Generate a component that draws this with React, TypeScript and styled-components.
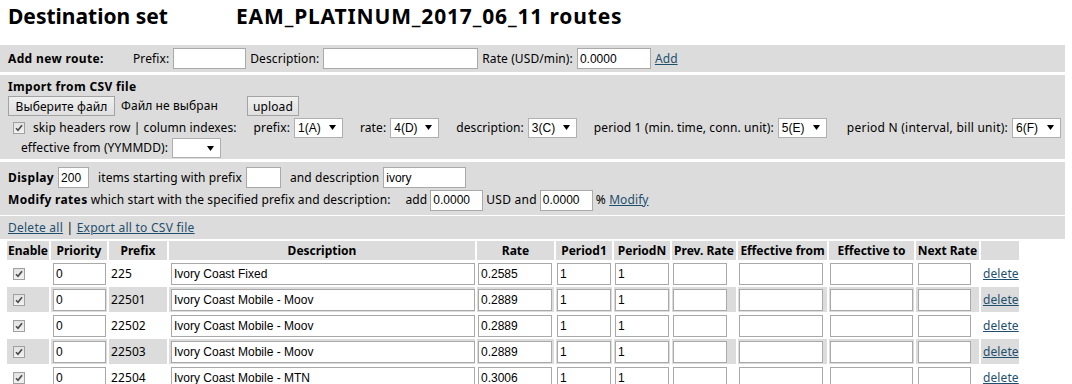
import styled, { createGlobalStyle } from "styled-components";

const routes = [
  { prefix: "225", description: "Ivory Coast Fixed", rate: "0.2585" },
  { prefix: "22501", description: "Ivory Coast Mobile - Moov", rate: "0.2889" },
  { prefix: "22502", description: "Ivory Coast Mobile - Moov", rate: "0.2889" },
  { prefix: "22503", description: "Ivory Coast Mobile - Moov", rate: "0.2889" },
  { prefix: "22504", description: "Ivory Coast Mobile - MTN", rate: "0.3006" },
  { prefix: "22505", description: "Ivory Coast Mobile - MTN", rate: "0.3006" },
];

const columns = [
  { title: "Enable", width: 42 },
  { title: "Priority", width: 56 },
  { title: "Prefix", width: 58 },
  { title: "Description", width: 306 },
  { title: "Rate", width: 77 },
  { title: "Period1", width: 56 },
  { title: "PeriodN", width: 56 },
  { title: "Prev. Rate", width: 64 },
  { title: "Effective from", width: 89 },
  { title: "Effective to", width: 85 },
  { title: "Next Rate", width: 63 },
  { title: "", width: 38 },
];

function Check() {
  return (
    <CheckBox>
      <svg width="8" height="8" viewBox="0 0 8 8">
        <path d="M1 4.2 L3 6.3 L7 1.2" fill="none" stroke="#4a4a4a" strokeWidth="1.6" />
      </svg>
    </CheckBox>
  );
}

function Select({ value, w }: { value: string; w: number }) {
  return (
    <SelectBox $w={w}>
      <span>{value}</span>
      <svg width="7" height="5" viewBox="0 0 7 5">
        <path d="M0 0 H7 L3.5 5 Z" fill="#000" />
      </svg>
    </SelectBox>
  );
}

function App() {
  return (
    <>
      <GlobalStyle />
      <Title>
        <TitleName>Destination set</TitleName>
        <SetName>EAM_PLATINUM_2017_06_11 routes</SetName>
      </Title>

      <Panel $h={27}>
        <Line>
          <PanelTitle $w={121}>Add new route:</PanelTitle>
          <span>Prefix:</span>
          <Field $w={73} value="" readOnly />
          <span>Description:</span>
          <Field $w={155} value="" readOnly />
          <span>Rate (USD/min):</span>
          <Field $w={74} value="0.0000" readOnly />
          <Link href="#">Add</Link>
        </Line>
      </Panel>

      <Panel $h={84} $top={4}>
        <Line $h={16}>
          <b>Import from CSV file</b>
        </Line>
        <Line $h={22}>
          <Button $w={107}>Выберите файл</Button>
          <NoFile>Файл не выбран</NoFile>
          <Button $w={52}>upload</Button>
        </Line>
        <Line $h={21} $gap={17}>
          <Group $indent={5}>
            <Check />
            <span style={{ marginLeft: 4 }}>skip headers row | column indexes:</span>
          </Group>
          <Group>
            <span>prefix:</span>
            <Select value="1(A)" w={49} />
          </Group>
          <Group>
            <span>rate:</span>
            <Select value="4(D)" w={49} />
          </Group>
          <Group>
            <span>description:</span>
            <Select value="3(C)" w={49} />
          </Group>
          <Group>
            <span>period 1 (min. time, conn. unit):</span>
            <Select value="5(E)" w={49} />
          </Group>
          <Group $indent={3}>
            <Wide>period N (interval, bill unit):</Wide>
            <Select value="6(F)" w={49} />
          </Group>
        </Line>
        <Line $h={20}>
          <Group $indent={13}>
            <span>effective from (YYMMDD):</span>
            <Select value="" w={49} />
          </Group>
        </Line>
      </Panel>

      <Panel $h={53} $gap={1} $top={4}>
        <Line $h={23} $gap={9}>
          <Group>
            <b>Display</b>
            <Field $w={31} value="200" readOnly />
          </Group>
          <Group>
            <span>items starting with prefix</span>
            <Field $w={35} value="" readOnly />
          </Group>
          <Group>
            <span>and description</span>
            <Field $w={83} value="ivory" readOnly />
          </Group>
        </Line>
        <Line $h={22} $gap={3}>
          <span>
            <b>Modify rates</b> which start with the specified prefix and description:
          </span>
          <span style={{ marginLeft: 12 }}>add</span>
          <Field $w={53} value="0.0000" readOnly />
          <Wide>USD and</Wide>
          <Field $w={53} value="0.0000" readOnly />
          <span>
            % <Link href="#">Modify</Link>
          </span>
        </Line>
      </Panel>

      <Panel $h={23} $gap={1}>
        <Line $h={23}>
          <Wide>
            <Link href="#">Delete all</Link> | <Link href="#">Export all to CSV file</Link>
          </Wide>
        </Line>
      </Panel>

      <Routes>
        <colgroup>
          {columns.map((c, i) => (
            <col key={i} style={{ width: c.width }} />
          ))}
        </colgroup>
        <thead>
          <tr>
            {columns.map((c, i) => (
              <Head key={i}>{c.title}</Head>
            ))}
          </tr>
        </thead>
        <tbody>
          {routes.map((r, i) => (
            <Row key={r.prefix} $odd={i % 2 === 1}>
              <Cell $pad={6}>
                <Check />
              </Cell>
              <Cell $pad={2}>
                <Field $w={53} $h={22} value="0" readOnly />
              </Cell>
              <Cell $pad={2}>{r.prefix}</Cell>
              <Cell $pad={2}>
                <Field $w={304} $h={22} value={r.description} readOnly />
              </Cell>
              <Cell $pad={1}>
                <Field $w={74} $h={22} value={r.rate} readOnly />
              </Cell>
              <Cell $pad={1}>
                <Field $w={54} $h={22} value="1" readOnly />
              </Cell>
              <Cell $pad={1}>
                <Field $w={54} $h={22} value="1" readOnly />
              </Cell>
              <Cell $pad={1}>
                <Field $w={54} $h={22} value="" readOnly />
              </Cell>
              <Cell $pad={1}>
                <Field $w={84} $h={22} value="" readOnly />
              </Cell>
              <Cell $pad={1}>
                <Field $w={83} $h={22} value="" readOnly />
              </Cell>
              <Cell $pad={2}>
                <Field $w={53} $h={22} value="" readOnly />
              </Cell>
              <Cell $pad={2}>
                <Link href="#">delete</Link>
              </Cell>
            </Row>
          ))}
        </tbody>
      </Routes>
    </>
  );
}

const GlobalStyle = createGlobalStyle`
  body {
    margin: 0;
    background: #fff;
    color: #000;
    font-family: "Noto Sans", Tahoma, sans-serif;
    font-size: 12px;
    line-height: 16px;
    letter-spacing: 0.1px;
  }
  b {
    letter-spacing: 0.35px;
  }
`;

const Title = styled.h1`
  display: flex;
  margin: 0;
  height: 45px;
  box-sizing: border-box;
  padding: 2px 8px 0;
  font-size: 21px;
  line-height: 28px;
  font-weight: 700;
  letter-spacing: 0;
`;

const TitleName = styled.span`
  width: 228px;
`;

const SetName = styled.span`
  letter-spacing: 0.85px;
`;

const Panel = styled.div<{ $h: number; $gap?: number; $top?: number }>`
  width: 1065px;
  height: ${(p) => p.$h}px;
  box-sizing: border-box;
  padding: ${(p) => p.$top ?? 0}px 8px 0;
  margin-bottom: ${(p) => p.$gap ?? 3}px;
  background: #dcdcdc;
  display: flex;
  flex-direction: column;
  justify-content: ${(p) => (p.$top ? "flex-start" : "center")};
`;

const Line = styled.div<{ $h?: number; $gap?: number }>`
  display: flex;
  align-items: center;
  gap: ${(p) => p.$gap ?? 4}px;
  height: ${(p) => (p.$h ? `${p.$h}px` : "auto")};
  white-space: nowrap;
`;

const Group = styled.span<{ $indent?: number }>`
  display: inline-flex;
  align-items: center;
  gap: 4px;
  margin-left: ${(p) => p.$indent ?? 0}px;
`;

const Wide = styled.span`
  letter-spacing: 0.25px;
`;

const PanelTitle = styled.b<{ $w: number }>`
  width: ${(p) => p.$w}px;
`;

const Field = styled.input<{ $w: number; $h?: number }>`
  width: ${(p) => p.$w}px;
  height: ${(p) => p.$h ?? 21}px;
  box-sizing: border-box;
  margin: 0;
  padding: 0 2px;
  border: 1px solid #a9a9a9;
  background: #fff;
  font-family: "Liberation Sans", Arial, sans-serif;
  font-size: 12px;
  letter-spacing: 0;
  color: #000;
  outline: none;
`;

const SelectBox = styled.span<{ $w: number }>`
  display: inline-flex;
  align-items: center;
  justify-content: space-between;
  width: ${(p) => p.$w}px;
  height: 20px;
  box-sizing: border-box;
  padding: 0 6px 0 3px;
  border: 1px solid #b0b0b0;
  background: #fff;
  font-family: "Liberation Sans", Arial, sans-serif;
  font-size: 12px;
  letter-spacing: 0;
`;

const CheckBox = styled.span`
  display: inline-flex;
  align-items: center;
  justify-content: center;
  width: 12px;
  height: 12px;
  box-sizing: border-box;
  border: 1px solid #a0a0a0;
  background: linear-gradient(#e2e2e2, #f2f2f2);
`;

const Button = styled.button<{ $w: number }>`
  width: ${(p) => p.$w}px;
  height: 20px;
  margin: 0;
  padding: 0;
  border: 1px solid #a3a3a3;
  background: linear-gradient(#f0f0f0, #e0e0e0);
  font-family: "Noto Sans", Tahoma, sans-serif;
  font-size: 12px;
  letter-spacing: 0.1px;
  color: #000;
`;

const NoFile = styled.span`
  width: 122px;
  margin-left: 2px;
`;

const Link = styled.a`
  color: #1e4f6e;
  text-decoration: underline;
`;

const Routes = styled.table`
  table-layout: fixed;
  border-collapse: separate;
  border-spacing: 2px 1px;
  margin: 0 0 0 5px;
  font-size: 12px;
`;

const Head = styled.th`
  height: 19px;
  padding: 0;
  background: #dcdcdc;
  font-weight: 700;
  letter-spacing: 0;
  text-align: center;
  white-space: nowrap;
`;

const Row = styled.tr<{ $odd: boolean }>`
  background: ${(p) => (p.$odd ? "#dcdcdc" : "transparent")};
`;

const Cell = styled.td<{ $pad: number }>`
  height: 25px;
  padding: 0 0 0 ${(p) => p.$pad}px;
  vertical-align: middle;
  white-space: nowrap;
`;

export default App;
